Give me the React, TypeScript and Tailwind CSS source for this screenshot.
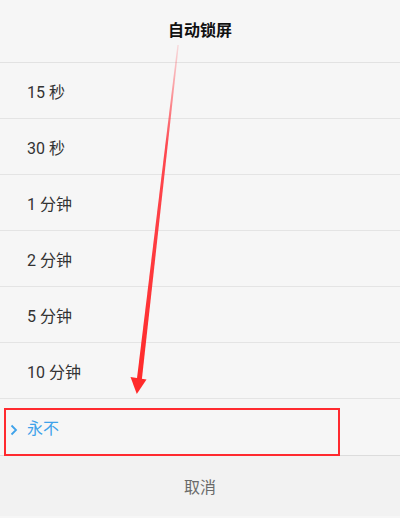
const options = ['15 秒', '30 秒', '1 分钟', '2 分钟', '5 分钟', '10 分钟'];

const font = { fontFamily: '"Roboto", "Noto Sans CJK SC", sans-serif' };

export default function App() {
    return (
        <div
            className="relative h-[518px] w-[400px] overflow-hidden bg-[#f6f6f6]"
            style={font}
        >
            <header className="flex h-[63px] items-center justify-center border-b border-[#e2e2e2]">
                <h1 className="text-[16px] font-bold text-[#111]">自动锁屏</h1>
            </header>

            <ul>
                {options.map((label) => (
                    <li
                        key={label}
                        className="flex h-[56px] items-center border-b border-[#e4e4e4] pl-[27px] pt-[4px] text-[16px] text-[#333]"
                    >
                        {label}
                    </li>
                ))}
                <li className="relative flex h-[56px] items-center pl-[10px] pt-[4px] text-[16px] text-[#3ea2ea]">
                    <svg
                        width="8"
                        height="12"
                        viewBox="0 0 8 12"
                        className="mr-[9px] mt-[1px]"
                    >
                        <path
                            d="M1.5 1.5 L6 6 L1.5 10.5"
                            fill="none"
                            stroke="#3ea2ea"
                            strokeWidth="1.8"
                        />
                    </svg>
                    永不
                    <div className="absolute left-[4px] top-[9px] h-[48px] w-[336px] border-2 border-[#ff2a2f]" />
                </li>
            </ul>

            <div className="flex h-[61px] items-center justify-center border-t border-[#dcdcdc] bg-[#f2f2f2] pt-[4px] text-[16px] text-[#6a6a6a]">
                取消
            </div>

            <svg
                className="pointer-events-none absolute left-0 top-0"
                width="400"
                height="518"
            >
                <defs>
                    <linearGradient id="shaft" x1="0" y1="45" x2="0" y2="380" gradientUnits="userSpaceOnUse">
                        <stop offset="0" stopColor="#ff3a44" stopOpacity="0.15" />
                        <stop offset="0.3" stopColor="#ff2a33" stopOpacity="0.85" />
                        <stop offset="1" stopColor="#ff2a2a" />
                    </linearGradient>
                </defs>
                <polygon
                    points="177.4,45 178.8,45 141.8,380 136.8,380"
                    fill="url(#shaft)"
                />
                <polygon points="130.5,377 146.5,379.5 136.8,394" fill="#ff2a2a" />
            </svg>
        </div>
    );
}
